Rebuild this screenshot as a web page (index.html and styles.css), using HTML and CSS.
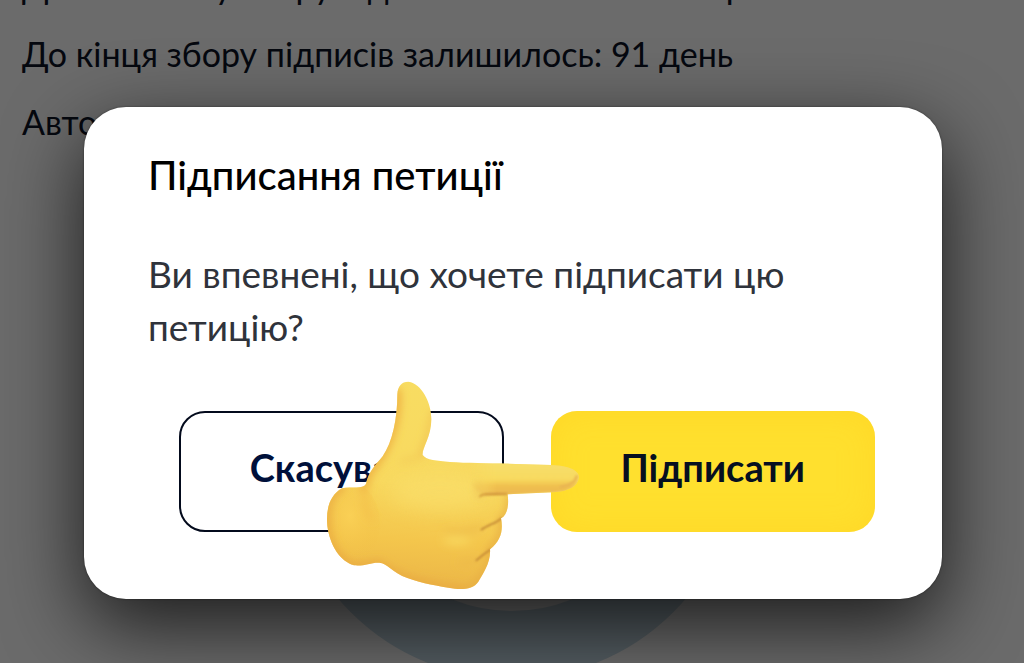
FILE: index.html
```
<!DOCTYPE html>
<html lang="uk">
<head>
<meta charset="utf-8">
<meta name="viewport" content="width=device-width, initial-scale=1">
<title>Підписання петиції</title>
<link rel="stylesheet" href="styles.css">
</head>
<body>
<main class="petition">
  <p class="petition-line">Дата початку збору підписів: 1 жовтня 2022 р.</p>
  <p class="petition-line">До кінця збору підписів залишилось: 91 день</p>
  <p class="petition-line">Автор (ініціатор):</p>
  <div class="progress-ring"></div>
</main>
<div class="overlay">
  <section class="dialog" role="dialog" aria-modal="true" aria-labelledby="dialog-title">
    <h1 class="dialog-title" id="dialog-title">Підписання петиції</h1>
    <p class="dialog-text">Ви впевнені, що хочете підписати цю петицію?</p>
    <div class="actions">
      <button class="button button-outline" type="button">Скасувати</button>
      <button class="button button-primary" type="button">Підписати</button>
      <svg class="hand" viewBox="0 0 840 690" aria-hidden="true">
        <defs>
          <linearGradient id="skin" x1="0.5" y1="0" x2="0.42" y2="1">
            <stop offset="0" stop-color="#f8dd62"/>
            <stop offset="0.5" stop-color="#f8d95f"/>
            <stop offset="0.75" stop-color="#f4c64c"/>
            <stop offset="1" stop-color="#e9b246"/>
          </linearGradient>
          <linearGradient id="finger" x1="0" y1="0" x2="0" y2="1">
            <stop offset="0" stop-color="#f7df6c"/>
            <stop offset="0.5" stop-color="#f8da60"/>
            <stop offset="0.72" stop-color="#f0c04e"/>
            <stop offset="1" stop-color="#e9b554"/>
          </linearGradient>
          <radialGradient id="wrist" cx="0.5" cy="0.4" r="0.6">
            <stop offset="0" stop-color="#fad055"/>
            <stop offset="1" stop-color="#f2bf45" stop-opacity="0"/>
          </radialGradient>
          <linearGradient id="fade" x1="480" y1="0" x2="560" y2="0" gradientUnits="userSpaceOnUse">
            <stop offset="0" stop-color="#000"/>
            <stop offset="1" stop-color="#fff"/>
          </linearGradient>
          <mask id="finger-mask" maskUnits="userSpaceOnUse" x="400" y="250" width="440" height="160">
            <rect x="400" y="250" width="440" height="160" fill="url(#fade)"/>
          </mask>
          <filter id="glow" x="-100%" y="-100%" width="300%" height="300%"><feGaussianBlur stdDeviation="28"/></filter>
          <filter id="soft" x="-50%" y="-50%" width="200%" height="200%"><feGaussianBlur stdDeviation="12"/></filter>
          <filter id="crease" x="-50%" y="-50%" width="200%" height="200%"><feGaussianBlur stdDeviation="3"/></filter>
          <clipPath id="outline"><path d="M262 76C263 50 277 37 296 38C334 44 364 99 364 150C364 205 336 236 338 258C350 275 380 274 420 279C480 283 550 282 640 286L725 288C775 291 807 302 807 326C803 352 776 367 730 370L593 376C597 407 593 438 573 448C580 482 574 514 540 541C543 580 519 615 505 638C492 658 463 662 435 659C380 651 341 644 292 627C248 611 230 582 208 581C180 580 164 592 132 589C90 576 60 530 52 470C47 420 60 378 96 358C125 352 158 362 168 345C175 310 195 290 218 262C247 220 262 150 262 76Z"/></clipPath>
        </defs>
        <g clip-path="url(#outline)">
          <rect width="840" height="690" fill="url(#skin)"/>
          <ellipse cx="120" cy="465" rx="90" ry="125" fill="url(#wrist)"/>
          <ellipse cx="390" cy="370" rx="150" ry="55" fill="#f9de6a" opacity="0.7" filter="url(#glow)"/>
          <g filter="url(#soft)" fill="none" stroke-linecap="round" stroke-linejoin="round">
            <path d="M260 70C262 150 240 235 175 310L160 355" stroke="#eeb043" stroke-width="26"/>
            <path d="M96 355C48 380 45 440 56 500C72 556 106 590 140 593L210 584C260 630 350 650 465 663" stroke="#e9a93f" stroke-width="20"/>
            <path d="M368 130C366 190 340 230 334 260" stroke="#efbd4f" stroke-width="12"/>
            <path d="M168 360C158 390 165 425 185 450" stroke="#f4c04a" stroke-width="14"/>
            <path d="M598 385C602 425 590 446 574 451C585 500 562 525 540 541C545 596 510 640 475 662" stroke="#e7ad42" stroke-width="18"/>
            <ellipse cx="440" cy="514" rx="42" ry="14" fill="#f9da60" opacity="0.8"/>
            <path d="M410 484C440 493 475 490 512 474M450 580C470 585 485 582 500 567" stroke="#eab649" stroke-width="9"/>
            <path d="M275 278C300 275 315 265 332 264" stroke="#f0c452" stroke-width="8"/>
            <path d="M508 342C502 355 504 370 510 384" stroke="#e8b34b" stroke-width="9"/>
          </g>
          <g mask="url(#finger-mask)">
            <path d="M470 280C570 280 650 285 725 288C775 291 807 302 807 326C803 352 776 367 730 370L520 379L470 340Z" fill="url(#finger)" filter="url(#crease)"/>
          </g>
          <g filter="url(#crease)" fill="none" stroke-linecap="round">
            <path d="M510 382C515 374 530 376 590 375" stroke="#c98b32" stroke-width="5"/>
            <path d="M514 482C535 467 560 462 574 448M499 574C515 560 526 552 541 542" stroke="#bd8132" stroke-width="5"/>
            <path d="M752 354C782 350 796 340 800 322" stroke="#e9b552" stroke-width="8"/>
          </g>
        </g>
      </svg>
    </div>
  </section>
</div>
</body>
</html>
```
FILE: styles.css
```
* { box-sizing: border-box; }

body {
  margin: 0;
  min-height: 100vh;
  position: relative;
  overflow: hidden;
  background: #6b6b6b;
  font-family: Lato, "Open Sans", sans-serif;
}

.petition {
  height: 100vh;
  margin-top: -48px;
  padding: 0 22px;
  color: #05080f;
}

.petition-line {
  margin: 0;
  font-size: 34px;
  line-height: 68px;
}

.progress-ring {
  width: 456px;
  height: 456px;
  margin: 67px auto 0;
  border: 68px solid #545d62;
  border-radius: 50%;
}

.overlay {
  position: absolute;
  inset: 0;
  padding: 107px 82px 0 84px;
}

.dialog {
  padding: 38px 67px 67px 64px;
  border-radius: 42px;
  background: #fff;
  box-shadow: 0 0 2px rgba(0, 0, 0, 0.5), 0 26px 80px rgba(0, 0, 0, 0.75);
}

.dialog-title {
  margin: 0;
  color: #000;
  font-size: 40px;
  font-weight: 500;
  line-height: 60px;
}

.dialog-text {
  margin: 42px 0 58px;
  color: #2f333b;
  font-size: 37px;
  line-height: 53px;
}

.actions {
  position: relative;
  display: grid;
  grid-template-columns: 1fr 1fr;
  gap: 47px;
  padding-left: 31px;
}

.button {
  height: 121px;
  padding: 0 6px 10px;
  border: 0;
  border-radius: 26px;
  color: #00103a;
  font-family: inherit;
  font-size: 38px;
  font-weight: 700;
}

.button-outline {
  border: 2px solid #030a1c;
  background: #fff;
}

.button-primary {
  background: #ffe02e;
  box-shadow: inset 0 0 32px rgba(255, 208, 32, 0.5);
  color: #060f20;
}

.hand {
  position: absolute;
  top: -42px;
  left: 162px;
  width: 280px;
  height: 230px;
  pointer-events: none;
}
```
